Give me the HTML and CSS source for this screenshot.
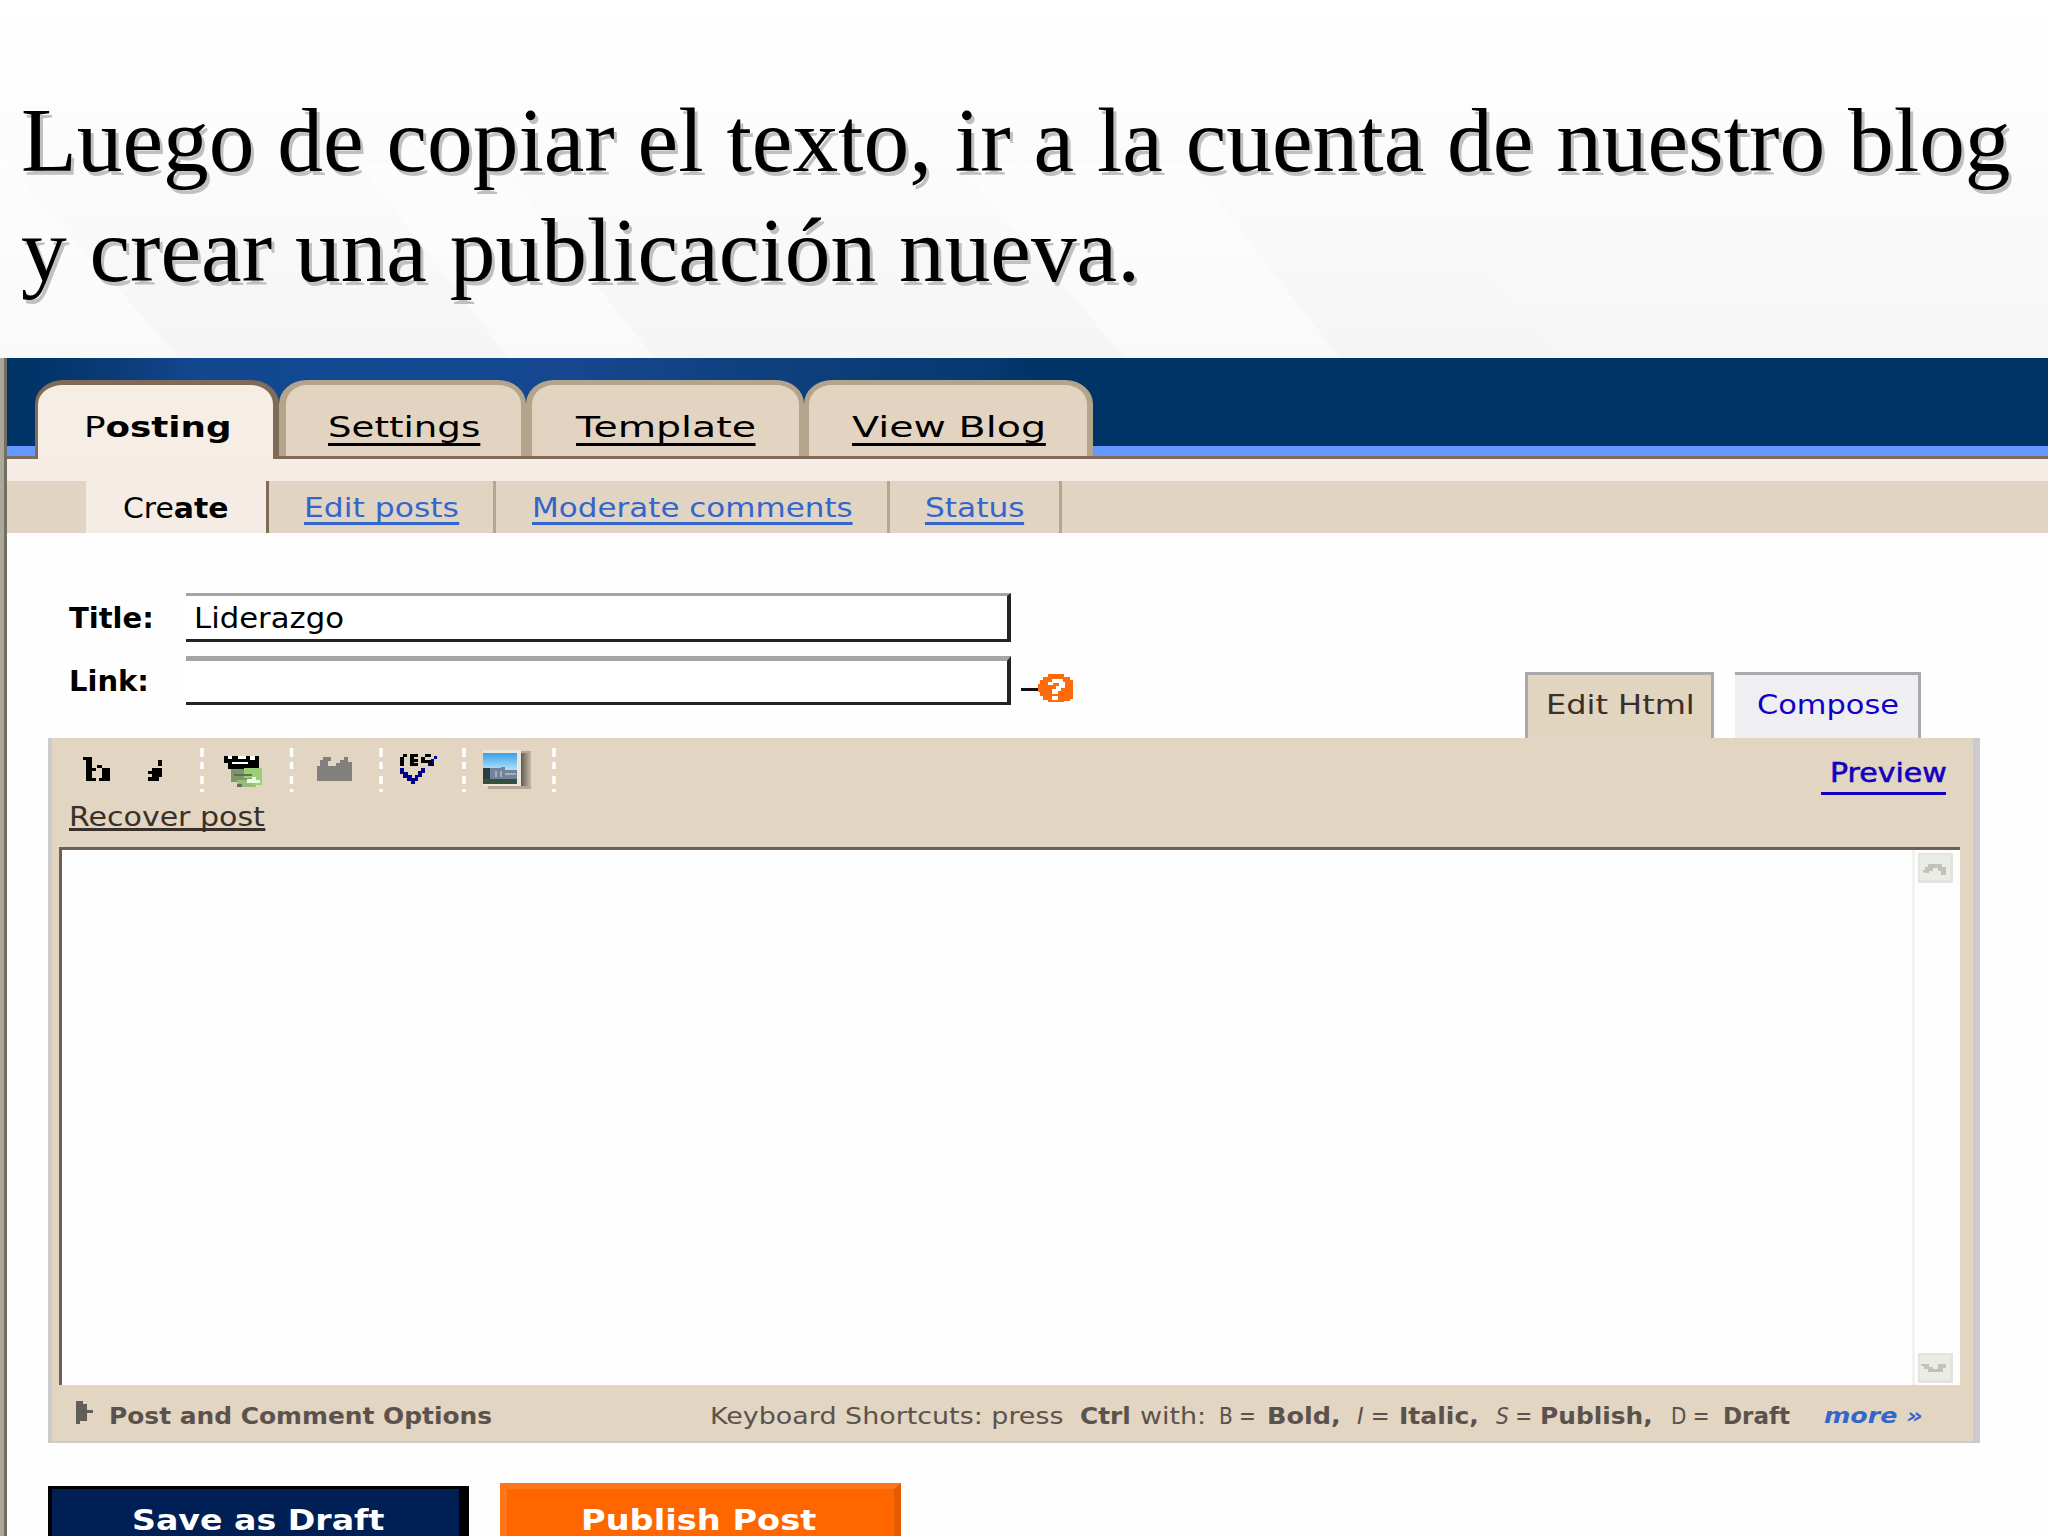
FILE: index.html
```html
<!DOCTYPE html>
<html lang="es">
<head>
<meta charset="utf-8">
<title>Publicación nueva</title>
<link rel="stylesheet" href="styles.css">
</head>
<body>
<div class="slide">
  <header class="heading">
    <svg class="rays" viewBox="0 0 2048 358" preserveAspectRatio="none" aria-hidden="true">
      <path d="M0 150 L30 190 L180 358 L0 358Z"/>
      <path d="M360 165 L500 165 L655 358 L508 358Z"/>
      <path d="M960 165 L1190 165 L1340 358 L1125 358Z"/>
      <path d="M1400 165 L2048 165 L2048 358 L1560 358Z" opacity=".3"/>
    </svg>
    <h1>Luego de copiar el texto, ir a la cuenta de nuestro blog<br>y crear una publicación nueva.</h1>
  </header>
  <main class="app">
    <nav class="tabs">
      <a class="tab active"><span class="t posting">P<b>osting</b></span></a>
      <a class="tab settings"><span class="t u">Settings</span></a>
      <a class="tab template"><span class="t u">Template</span></a>
      <a class="tab view"><span class="t u">View Blog</span></a>
    </nav>
    <nav class="subtabs">
      <a class="sub create"><span class="t">Cre<b>ate</b></span></a>
      <a class="sub edit"><span class="t u">Edit posts</span></a>
      <a class="sub moderate"><span class="t u">Moderate comments</span></a>
      <a class="sub status"><span class="t u">Status</span></a>
    </nav>
    <section class="form">
      <div class="fields">
        <div class="field title-field"><label><span class="t">Title:</span></label><div class="input"><span class="t">Liderazgo</span></div></div>
        <div class="field link-field"><label><span class="t">Link:</span></label><div class="input"></div>
          <i class="dash"></i>
          <svg class="help" viewBox="0 0 35 28"><path d="M10 0H26V3H32V6H35V25H32V27H26V28H10V26H5V22H2V18H0V10H2V6H5V3H10Z" fill="#ff6a0a"/><path d="M10 8H14V5H25V8H27V14H23V17H20V20H14V15H18V12H21V9H15V11H10ZM14 22H20V26H14Z" fill="#fff"/></svg>
        </div>
      </div>
      <div class="modes">
        <a class="mode html"><span class="t">Edit Html</span></a>
        <a class="mode compose"><span class="t">Compose</span></a>
      </div>
    </section>
    <section class="editor">
      <div class="toolbar">
        <div class="tools">
          <svg viewBox="0 0 500 44">
            <g stroke="#fff" stroke-width="3.500" stroke-dasharray="9 5 7 7 8 5 5 9"><path d="M134 0V44M223.500 0V44M313 0V44M396 0V44M486 0V44"/></g>
            <path d="M15 9H24V30H28V33H18V12H15ZM29 17H34V20H42V33H31V30H34V20H29ZM24 20H28V23H24Z" fill="#000"/>
            <path d="M90 12H94V18H90ZM84 20H94V29H91V33H80V29H84V26H80V23H84Z" fill="#000"/>
            <path d="M156 8H160V11H164V8H170V11H178V8H182V11H187V8H191V21H184V25H165V21H160V15H156Z" fill="#000"/><path d="M160 8H164V11H160ZM170 8H178V11H170ZM182 8H187V12H182ZM164 14H180V16H164Z" fill="#fff"/>
            <path d="M163 21H184V39H169V34H163Z" fill="#7f9668"/><path d="M169 32H184V35H188V39H169Z" fill="#9aba7a"/><path d="M176 20H194V37H184V30H176Z" fill="#9bcf77"/><path d="M179 31H184V29H188V32H192V35H179Z" fill="#eaffdb"/><path d="M166 26H184V28H166ZM169 36H174V39H169Z" fill="#5c7155"/>
            <path d="M249 33V18H252V12H255V9H263V13H260V18H268V15H272V12H276V9H280V14H284V33Z" fill="#837f7d"/>
            <path d="M332 18V9H335V6H339V9H336V18ZM342 6H350V9H346V11H350V14H346V15H350V18H342ZM353 9H357V6H363V9H357V12H363V15H366V18H361V15H353Z" fill="#000"/>
            <path d="M332 20H336V24H340V27H344V30H347V27H350V23H353V20H357V25H354V29H350V33H347V36H343V33H339V30H335V26H332ZM353 20H356V23H353ZM360 15H363V18H360ZM363 11H366V15H363ZM366 8H369V11H366Z" fill="#00008c"/>
            <defs><linearGradient id="sky" x2="0" y2="1"><stop stop-color="#3a9ee8"/><stop offset=".5" stop-color="#a8dcf8"/></linearGradient><linearGradient id="shade"><stop stop-color="#4d4741"/><stop offset="1" stop-color="#c9bba8"/></linearGradient></defs>
            <path d="M420 3H463V41H420Z" fill="#b5a898"/><path d="M451 5H463V38H451Z" fill="url(#shade)"/><path d="M415 2H453V38H415Z" fill="#eee6d8"/><path d="M415 5H449V36H415Z" fill="url(#sky)"/><path d="M415 22H421V20H433V19H437V22H449V36H415Z" fill="#71829a"/><path d="M415 20H422V36H415Z" fill="#293f40"/><path d="M415 31H449V36H415Z" fill="#34513e"/><path d="M427 23H429V29H427ZM432 23H434V29H432ZM437 25H448V27H437Z" fill="#9eb0c4"/>
          </svg>
        </div>
        <div class="recover"><span class="t u">Recover post</span></div>
        <a class="preview"><span class="t">Preview</span></a>
      </div>
      <div class="textbox">
        <div class="scroll">
          <svg viewBox="0 0 35 30"><path d="M0 0H35V30H0Z" fill="#e4e4df"/><path d="M2 2H32V27H2Z" fill="#ecece7"/><path d="M4 17H7V14H10V11H24V14H28V22H23V18H20V15H15V18H11V20H7Z" fill="#c2c2bd"/></svg>
          <svg viewBox="0 0 35 30"><path d="M0 0H35V30H0Z" fill="#e4e4df"/><path d="M2 2H32V27H2Z" fill="#ecece7"/><path d="M3 11H11V14H15V16H20V11H28V15H25V19H10V16H6V13H3Z" fill="#c2c2bd"/></svg>
        </div>
      </div>
      <footer class="hints">
        <svg class="tri" viewBox="0 0 17 23"><path d="M0 0H7V3H11V9H17V12H11V20H4V23H0Z" fill="#625e5a"/></svg>
        <b class="options"><span class="t">Post and Comment Options</span></b>
        <span class="k0"><span class="t">Keyboard Shortcuts: press</span></span>
        <b class="k1"><span class="t">Ctrl</span></b>
        <span class="k2"><span class="t">with:</span></span>
        <span class="k3"><span class="t">B =</span></span>
        <b class="k4"><span class="t">Bold,</span></b>
        <span class="k5"><span class="t"><i>I</i> =</span></span>
        <b class="k6"><span class="t">Italic,</span></b>
        <span class="k7"><span class="t"><i>S</i> =</span></span>
        <b class="k8"><span class="t">Publish,</span></b>
        <span class="k9"><span class="t">D =</span></span>
        <b class="k10"><span class="t">Draft</span></b>
        <b class="more"><span class="t">more »</span></b>
      </footer>
    </section>
    <div class="actions">
      <div class="btn save"><span class="t">Save as Draft</span></div>
      <div class="btn publish"><span class="t">Publish Post</span></div>
    </div>
  </main>
</div>
</body>
</html>
```
FILE: styles.css
```css
* { box-sizing: border-box; }
body { margin: 0; background: #fefefe; font-family: "DejaVu Sans", Verdana, sans-serif; color: #000; }
.slide { width: 2048px; height: 1536px; overflow: hidden; }
.t { display: inline-block; white-space: pre; transform: scaleX(var(--s, 1)); transform-origin: 0 50%; }
svg { display: block; }

.heading { position: relative; height: 358px; padding: 86px 0 0 21px; background: linear-gradient(#fff, #fdfdfd 30%, #f5f5f5); }
.rays { position: absolute; inset: 0; width: 2048px; height: 358px; fill: #fff; fill-opacity: .45; }
h1 { position: relative; margin: 0; font: 400 91.4px/110px "Liberation Serif", "Times New Roman", serif; white-space: nowrap; text-shadow: 3px 4px 0 #c0c0c0; }

.app { height: 1178px; border-left: 4px solid #aca899; box-shadow: inset 3px 0 #716f64; padding-left: 3px; background: #fefefe; }
.tabs { display: flex; align-items: flex-start; height: 101px; padding: 22px 0 0 28px;
  background: linear-gradient(#806a5c, #806a5c) 0 98px / 100% 3px no-repeat,
    linear-gradient(#6699ff, #6699ff) 0 88px / 100% 10px no-repeat,
    linear-gradient(90deg, #003366 20px, #0c3d7a 120px, #134790 190px, #114a92 400px, #164790 560px, #0d407d 770px, #073a72 970px, #003366 1030px); }
.tab { height: 76px; font-size: 29px; line-height: 34px; padding-top: 25px; background: #e2d4c0; border: 0 solid #b5a48c; border-top-width: 5px; border-radius: 28px 28px 0 0 / 24px 24px 0 0; }
.tab.active { width: 244px; height: 79px; padding-left: 46px; background: #f6ede4; border-color: #806a58; border-width: 5px 6px 0 3px; }
.u { border-bottom: 3px solid currentColor; }
.tab .u { height: 36px; }
.posting { --s: 1.23; }
.settings { width: 247px; padding-left: 42px; border-width: 5px 5px 0 7px; --s: 1.28; }
.template { width: 278px; padding-left: 44px; border-width: 5px 5px 0 6px; --s: 1.36; }
.view { width: 289px; padding-left: 43px; border-width: 5px 6px 0 5px; --s: 1.365; }

.subtabs { display: flex; height: 74px; padding-left: 79px; border-top: 22px solid #f5ede5; background: #e1d4c2; font-size: 26.5px; line-height: 34px; color: #3366cc; }
.sub { height: 52px; padding-top: 10px; border-right: 3px solid #b5a593; }
.sub .u { height: 34px; }
.create { width: 183px; padding-left: 37px; background: #f5ede5; border-color: #806a58; color: #000; font-size: 29px; --s: 1.03; }
.edit { width: 227px; padding-left: 35px; --s: 1.185; }
.moderate { width: 394px; padding-left: 36px; --s: 1.17; }
.status { width: 172px; padding-left: 35px; --s: 1.18; }

.form { display: flex; justify-content: space-between; height: 205px; }
.fields { padding: 60px 0 0 62px; font-size: 29px; }
.field { display: flex; height: 49px; }
.title-field { margin-bottom: 14px; }
label { width: 117px; font-weight: 700; line-height: 51px; }
.title-field label { --s: 1; }
.input { width: 825px; padding-left: 8px; line-height: 45px; background: #fff; border: solid #222528; border-width: 3px 4px 3px 0; border-top-color: #a5a5a7; --s: 1.06; }
.link-field .input { border-top-width: 5px; }
.dash { width: 17px; height: 3px; margin: 32px 0 0 10px; background: #111; }
.help { width: 35px; height: 28px; margin-top: 18px; }
.modes { display: flex; gap: 21px; align-items: flex-end; margin-right: 127px; font-size: 26px; line-height: 34px; }
.mode { height: 66px; padding-top: 13px; border: 3px solid #a9a8ac; border-bottom: 0; }
.html { width: 189px; padding-left: 18px; background: #e2d5c0; color: #3a302a; --s: 1.23; }
.compose { width: 186px; padding-left: 22px; border-left: 0; background: #efeef1; color: #1100c8; --s: 1.17; }

.editor { width: 1932px; height: 705px; margin-left: 41px; padding: 0 14px 0 7px; border: 0 solid #cbcbcb; border-width: 0 7px 2px 4px; background: #e2d5c1; }
.toolbar { display: grid; grid-template-columns: 1fr 138px; grid-template-rows: 66px 43px; height: 109px; padding-left: 9px; }
.tools { padding-top: 10px; }
.tools svg { width: 500px; height: 44px; }
.recover { font-size: 26px; line-height: 26px; color: #3a302a; --s: 1.155; padding-left: 1px; }
.recover .u { height: 27px; }
.preview { grid-column: 2; grid-row: 1; width: 125px; height: 57px; padding: 20px 0 0 9px; font-size: 27px; line-height: 30px; color: #1100c0; border-bottom: 3px solid #1100c0; --s: 1.11; -webkit-text-stroke: .6px #1100c0; }
.textbox { display: flex; justify-content: flex-end; width: 1901px; height: 538px; background: #fefefe; border: 0 solid #6a6058; border-width: 3px 0 0 3px; }
.scroll { display: flex; flex-direction: column; justify-content: space-between; width: 48px; padding: 3px 0 2px 3px; border-left: 3px solid #f2f2f0; }
.scroll svg { width: 35px; height: 30px; }
.hints { display: flex; height: 56px; padding: 16px 0 0 17px; font-size: 23px; line-height: 30px; color: #5b524d; }
.tri { width: 17px; height: 23px; margin-right: 16px; }
.options { width: 601px; --s: 1.082; }
.k0 { width: 370px; --s: 1.17; }
.k1 { width: 60px; --s: 1.08; }
.k2 { width: 79px; --s: 1.17; }
.k3 { width: 48px; --s: .87; }
.k4 { width: 90px; --s: 1.11; }
.k5 { width: 42px; --s: .98; }
.k6 { width: 97px; --s: 1.09; }
.k7 { width: 44px; --s: .88; }
.k8 { width: 131px; --s: 1.08; }
.k9 { width: 52px; --s: .87; }
.k10 { width: 101px; --s: 1; }
.more { color: #3366cc; font-style: italic; font-size: 22px; --s: 1.15; }
.hints > b, .hints > span { flex: none; }

.actions { display: flex; align-items: flex-start; padding: 40px 0 0 41px; font-size: 29px; font-weight: 700; color: #fff; line-height: 34px; }
.btn { height: 80px; }
.save { width: 421px; margin: 3px 31px 0 0; padding: 14px 0 0 80px; background: #002055; border: solid #000; border-width: 3px 10px 3px 4px; --s: 1.145; }
.publish { width: 401px; padding: 14px 0 0 74px; background: #ff6600; border: solid #e65c00; border-width: 6px 7px 6px 7px; border-top-color: #ff7519; border-left-color: #ff7519; --s: 1.16; }
```
